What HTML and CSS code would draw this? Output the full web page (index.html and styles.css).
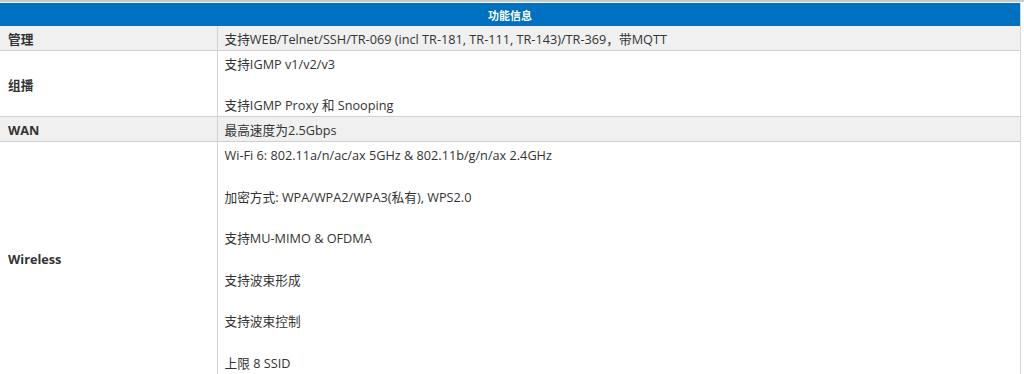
FILE: index.html
```html
<!DOCTYPE html>
<html lang="zh-CN">
<head>
<meta charset="utf-8">
<link rel="stylesheet" href="styles.css">
</head>
<body>
<div class="frame">
<table class="spec">
  <colgroup>
    <col class="col-label">
    <col class="col-value">
  </colgroup>
  <thead>
    <tr><th colspan="2">功能信息</th></tr>
  </thead>
  <tbody>
    <tr class="alt">
      <td class="label">管理</td>
      <td class="value"><p>支持WEB/Telnet/SSH/TR-069 (incl TR-181, TR-111, TR-143)/TR-369，带MQTT</p></td>
    </tr>
    <tr>
      <td class="label">组播</td>
      <td class="value"><p>支持IGMP v1/v2/v3</p><p>支持IGMP Proxy 和 Snooping</p></td>
    </tr>
    <tr class="alt">
      <td class="label">WAN</td>
      <td class="value"><p>最高速度为2.5Gbps</p></td>
    </tr>
    <tr>
      <td class="label">Wireless</td>
      <td class="value">
        <p>Wi-Fi 6: 802.11a/n/ac/ax 5GHz &amp; 802.11b/g/n/ax 2.4GHz</p>
        <p>加密方式: WPA/WPA2/WPA3(私有), WPS2.0</p>
        <p>支持MU-MIMO &amp; OFDMA</p>
        <p>支持波束形成</p>
        <p>支持波束控制</p>
        <p>上限 8 SSID</p>
      </td>
    </tr>
  </tbody>
</table>
</div>
</body>
</html>
```
FILE: styles.css
```css
html, body {
  margin: 0;
  padding: 0;
  background: #ffffff;
}
.frame {
  border-top: 2px solid #c9c9c9;
  padding-top: 1px;
  width: 1024px;
}
.spec {
  width: 1021px;
  border-collapse: collapse;
  font-family: "Open Sans", "Noto Sans CJK SC", sans-serif;
  font-size: 12.7px;
  color: #333333;
  table-layout: fixed;
}
.col-label {
  width: 217px;
}
.spec th {
  background: #0070c0;
  color: #ffffff;
  font-size: 11px;
  font-weight: bold;
  height: 23px;
  padding: 0;
  text-align: center;
  border-right: 1px solid #d4d4d4;
}
.spec td {
  border-bottom: 1px solid #d0d0d0;
  border-right: 1px solid #d4d4d4;
  padding: 3px 7px 0 7px;
  vertical-align: middle;
  line-height: 20.8px;
}
.spec tr.alt td {
  background: #f0f0f0;
}
.spec td.label {
  font-weight: bold;
  padding-left: 8px;
}
.spec td.value p {
  margin: 0;
}
.spec td.value p + p {
  margin-top: 20.8px;
}
```
